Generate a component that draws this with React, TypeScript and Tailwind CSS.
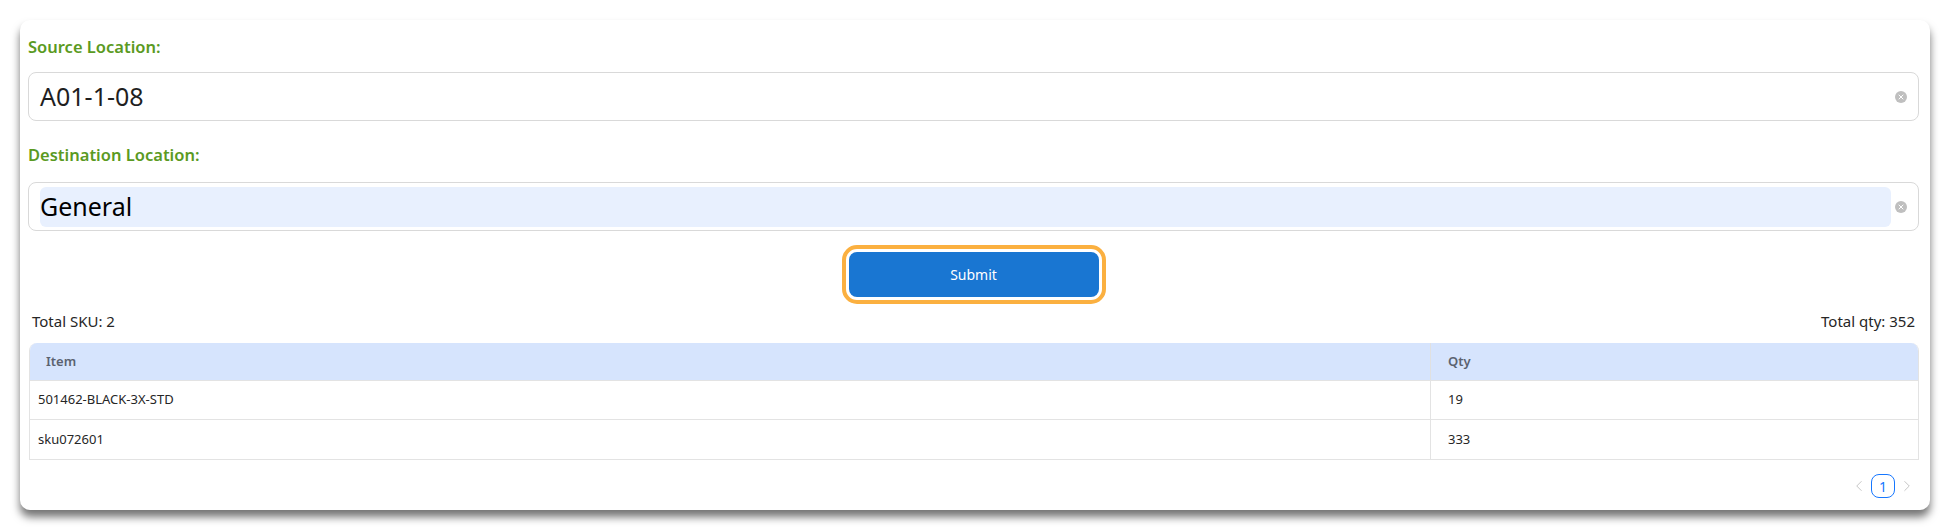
import { ChevronLeft, ChevronRight, X } from "lucide-react";

const rows = [
  { item: "501462-BLACK-3X-STD", qty: 19 },
  { item: "sku072601", qty: 333 },
];

const font = { fontFamily: '"Segoe UI", "Noto Sans", sans-serif' };

const ClearIcon = () => (
  <span className="grid h-3 w-3 shrink-0 place-items-center rounded-full bg-[#bfbfbf]">
    <X className="h-2 w-2 text-white" strokeWidth={3} />
  </span>
);

const Field = ({ value, filled }: { value: string; filled?: boolean }) => (
  <div className="flex h-[49px] items-center gap-1 rounded-lg border border-[#d9d9d9] bg-white px-[11px]">
    <div
      className={`flex h-10 flex-1 items-center rounded-md text-[25px] ${
        filled ? "bg-[#e8f0fe] text-black" : "text-[#1f1f1f]"
      }`}
    >
      {value}
    </div>
    <ClearIcon />
  </div>
);

export default function App() {
  return (
    <div className="min-h-[530px] bg-white pt-5 pl-5 pr-[21px]" style={font}>
      <div className="rounded-[10px] bg-white pt-[15px] pb-3 pl-2 pr-[11px] shadow-[0_7px_9px_rgba(0,0,0,0.55)]">
        <div className="h-6 text-[16.5px] leading-6 font-semibold text-[#5a9a22]">Source Location:</div>
        <div className="mt-[13px]">
          <Field value="A01-1-08" />
        </div>
        <div className="mt-[22px] h-6 text-[16.5px] leading-6 font-semibold text-[#5a9a22]">
          Destination Location:
        </div>
        <div className="mt-[15px]">
          <Field value="General" filled />
        </div>

        <div className="mt-[21px] flex justify-center">
          <button className="h-[45px] w-[250px] rounded-lg bg-[#1976d2] text-[14px] text-white outline-4 outline-offset-[3px] outline-[#fbb040]">
            Submit
          </button>
        </div>

        <div className="mt-[14px] flex h-5 items-center justify-between px-1 text-[15px] text-[#262626]">
          <span>Total SKU: 2</span>
          <span>Total qty: 352</span>
        </div>

        <div className="mt-3 ml-px overflow-hidden rounded-t-lg border border-t-0 border-[#e3e3e3]">
          <div className="grid h-[38px] grid-cols-[1401px_1fr] border-b border-[#e3e3e3] bg-[#d6e4fd] text-[13px] font-semibold text-[#5b6270]">
            <div className="flex items-center border-r border-[#e0e0e0] pl-4">Item</div>
            <div className="flex items-center pl-[17px]">Qty</div>
          </div>
          {rows.map((r, i) => (
            <div
              key={r.item}
              className={`grid h-[39px] grid-cols-[1401px_1fr] text-[13px] text-[#262626] ${
                i < rows.length - 1 ? "border-b border-[#e3e3e3]" : ""
              }`}
            >
              <div className="flex items-center border-r border-[#e3e3e3] pl-2">{r.item}</div>
              <div className="flex items-center pl-[17px]">{r.qty}</div>
            </div>
          ))}
        </div>

        <div className="mt-[14px] flex justify-end">
          <span className="grid h-6 w-6 place-items-center text-[#c4c4c4]">
            <ChevronLeft className="h-[18px] w-[18px]" strokeWidth={1.3} />
          </span>
          <span className="grid h-6 w-6 place-items-center rounded-lg border border-[#1677ff] text-[14px] text-[#1677ff]">
            1
          </span>
          <span className="grid h-6 w-6 place-items-center text-[#c4c4c4]">
            <ChevronRight className="h-[18px] w-[18px]" strokeWidth={1.3} />
          </span>
        </div>
      </div>
    </div>
  );
}
